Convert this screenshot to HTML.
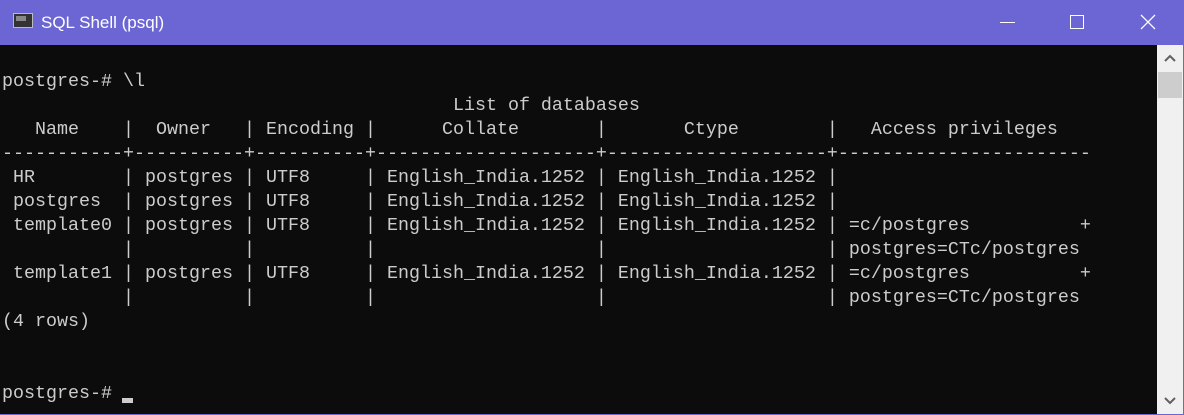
<!DOCTYPE html>
<html><head><meta charset="utf-8"><style>
html,body{margin:0;padding:0;width:1184px;height:415px;overflow:hidden;background:#0c0c0c}
.tb{position:absolute;left:0;top:0;width:1184px;height:45px;background:#6b66d3;color:#fff;font-family:"Liberation Sans",sans-serif;font-size:17px}
.tb .t{position:absolute;left:41px;top:13px}
.icon{position:absolute;left:13px;top:13px;width:20px;height:15px;background:#333;border:1px solid #bbb;box-sizing:border-box}
.icon:after{content:"";position:absolute;left:2px;top:2px;width:10px;height:5px;background:#888}
.min{position:absolute;left:1000px;top:22px;width:15px;height:1px;background:#fff}
.max{position:absolute;left:1070px;top:15px;width:14px;height:14px;border:1px solid #fff;box-sizing:border-box}
.term{position:absolute;left:2px;top:70px;margin:0;font-family:"Liberation Mono",monospace;font-size:18.33px;line-height:24px;color:#cccccc;white-space:pre}
.sb{position:absolute;left:1157px;top:45px;width:26px;height:369px;background:#f0f0f0}
.thumb{position:absolute;left:1158px;top:72px;width:24px;height:26px;background:#cdcdcd}
.rb{position:absolute;left:1183px;top:45px;width:1px;height:370px;background:#6b66d3}
.bb{position:absolute;left:0;top:414px;width:1184px;height:1px;background:#6b66d3}
.cur{position:absolute;left:122px;top:398px;width:11px;height:5px;background:#ccc}
</style></head><body>
<div class="tb"><div class="icon"></div><span class="t">SQL Shell (psql)</span>
<div class="min"></div><div class="max"></div>
<svg style="position:absolute;left:1140px;top:14px" width="16" height="16"><path d="M1 1L15 15M15 1L1 15" stroke="#fff" stroke-width="1.3"/></svg>
</div>
<pre class="term">postgres-# \l
                                         List of databases
   Name    |  Owner   | Encoding |      Collate       |       Ctype        |   Access privileges
-----------+----------+----------+--------------------+--------------------+-----------------------
 HR        | postgres | UTF8     | English_India.1252 | English_India.1252 |
 postgres  | postgres | UTF8     | English_India.1252 | English_India.1252 |
 template0 | postgres | UTF8     | English_India.1252 | English_India.1252 | =c/postgres          +
           |          |          |                    |                    | postgres=CTc/postgres
 template1 | postgres | UTF8     | English_India.1252 | English_India.1252 | =c/postgres          +
           |          |          |                    |                    | postgres=CTc/postgres
(4 rows)


postgres-# </pre>
<div class="cur"></div>
<div class="sb"></div><div class="thumb"></div>
<svg style="position:absolute;left:1164px;top:54px" width="12" height="8"><path d="M1 7L6 2L11 7" stroke="#606060" stroke-width="2" fill="none"/></svg>
<svg style="position:absolute;left:1164px;top:397px" width="12" height="8"><path d="M1 1L6 6L11 1" stroke="#606060" stroke-width="2" fill="none"/></svg>
<div class="rb"></div><div class="bb"></div>
</body></html>
